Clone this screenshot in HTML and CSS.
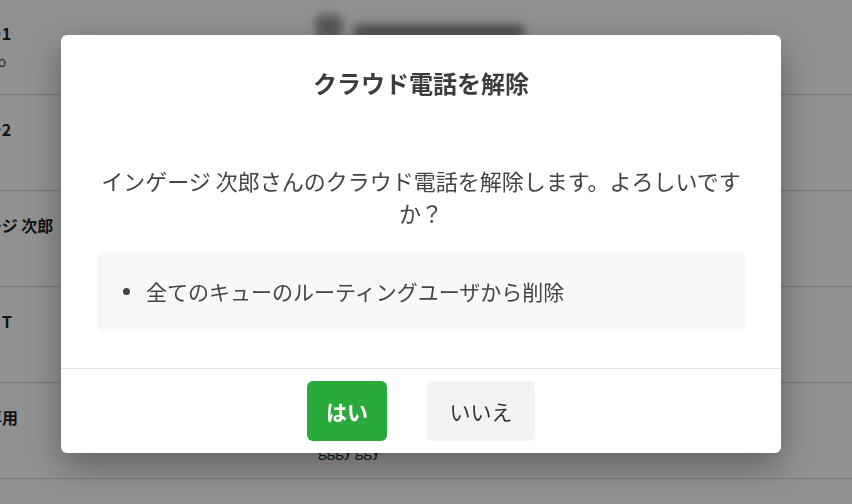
FILE: index.html
```html
<!DOCTYPE html>
<html lang="ja">
<head>
<meta charset="utf-8">
<link rel="stylesheet" href="styles.css">
</head>
<body>
<div class="page">
  <div class="topbar"><span class="blur-icon"></span><span class="blur-text"></span></div>
  <ul class="rows">
    <li class="row"><div class="cell name"><b>ユーザー1</b><span class="sub">ユーザーo</span></div><div class="cell info"><span>sample@engage.jp</span></div></li>
    <li class="row"><div class="cell name"><b>ユーザー2</b><span class="sub">ー</span></div><div class="cell info"><span>sample@engage.jp</span></div></li>
    <li class="row"><div class="cell name"><b>インゲージ 次郎</b><span class="sub">ー</span></div><div class="cell info"><span>sample@engage.jp</span></div></li>
    <li class="row"><div class="cell name"><b>サポートT</b><span class="sub">ー</span></div><div class="cell info"><span>sample@engage.jp</span></div></li>
    <li class="row"><div class="cell name"><b>テスト専用</b><span class="sub">ー</span></div><div class="cell info"><span>gggy ggy</span></div></li>
  </ul>
</div>
<div class="overlay">
  <div class="modal">
    <div class="modal-header">クラウド電話を解除</div>
    <div class="modal-body">
      <p class="message">インゲージ 次郎さんのクラウド電話を解除します。よろしいですか？</p>
      <ul class="effects">
        <li>全てのキューのルーティングユーザから削除</li>
      </ul>
    </div>
    <div class="modal-footer">
      <button class="btn btn-yes">はい</button>
      <button class="btn btn-no">いいえ</button>
    </div>
  </div>
</div>
</body>
</html>
```
FILE: styles.css
```css
* { box-sizing: border-box; }
html, body { margin: 0; height: 100%; }
body {
  font-family: "Noto Sans CJK JP", "Noto Sans", sans-serif;
  background: #fff;
  color: #333;
  overflow: hidden;
}
.page { position: relative; height: 100%; }
.topbar {
  position: absolute;
  left: 316px;
  top: 16px;
  display: flex;
  gap: 12px;
  align-items: flex-end;
  filter: blur(5px);
  opacity: 0.6;
}
.blur-icon { width: 26px; height: 24px; border-radius: 4px; background: #555; }
.blur-text { width: 170px; height: 14px; background: #333; border-radius: 3px; }
.rows { list-style: none; margin: -1px 0 0; padding: 0; }
.row {
  height: 96px;
  border-bottom: 1px solid #d8d8d8;
  display: flex;
  align-items: center;
}
.cell.name {
  display: flex;
  flex-direction: column;
  gap: 8px;
  margin-left: -62px;
  width: 380px;
  font-size: 16px;
  line-height: 20px;
}
.cell.name b { color: #222; font-weight: 700; }
.cell.name .sub { color: #555; font-size: 14px; margin-left: 4px; }
.row:not(:first-child) .sub { visibility: hidden; }
.cell.info { font-size: 15px; color: #222; padding-top: 38px; }
.overlay {
  position: fixed;
  inset: 0;
  background: rgba(0, 0, 0, 0.43);
  display: flex;
  justify-content: center;
  align-items: flex-start;
  padding: 35px 10px 0 0;
}
.modal {
  width: 720px;
  background: #fff;
  border-radius: 6px;
  box-shadow: 0 12px 36px rgba(0, 0, 0, 0.35);
  display: flex;
  flex-direction: column;
}
.modal-header {
  padding: 32px 36px 0;
  text-align: center;
  font-size: 24px;
  line-height: 32px;
  font-weight: 700;
  color: #3c3c3c;
}
.modal-body { padding: 65px 36px 37px; }
.message {
  margin: 0;
  text-align: center;
  font-size: 22px;
  line-height: 32px;
  color: #444;
}
.effects {
  list-style: none;
  margin: 23px 0 0;
  padding: 24px 24px;
  background: #f8f8f8;
  border-radius: 6px;
}
.effects li {
  display: flex;
  align-items: center;
  font-size: 21px;
  line-height: 32px;
  color: #444;
}
.effects li::before {
  content: "";
  width: 7px;
  height: 7px;
  border-radius: 50%;
  background: #444;
  margin: 0 16px 0 2px;
}
.modal-footer {
  border-top: 1px solid #e2e2e2;
  padding: 12px;
  display: flex;
  justify-content: center;
  gap: 40px;
}
.btn {
  height: 60px;
  border: 0;
  border-radius: 6px;
  font-family: inherit;
  font-size: 21px;
  padding: 0;
}
.btn-yes { width: 80px; background: #2aaa3a; color: #fff; font-weight: 700; }
.btn-no { width: 108px; background: #f3f3f3; color: #333; }
```
